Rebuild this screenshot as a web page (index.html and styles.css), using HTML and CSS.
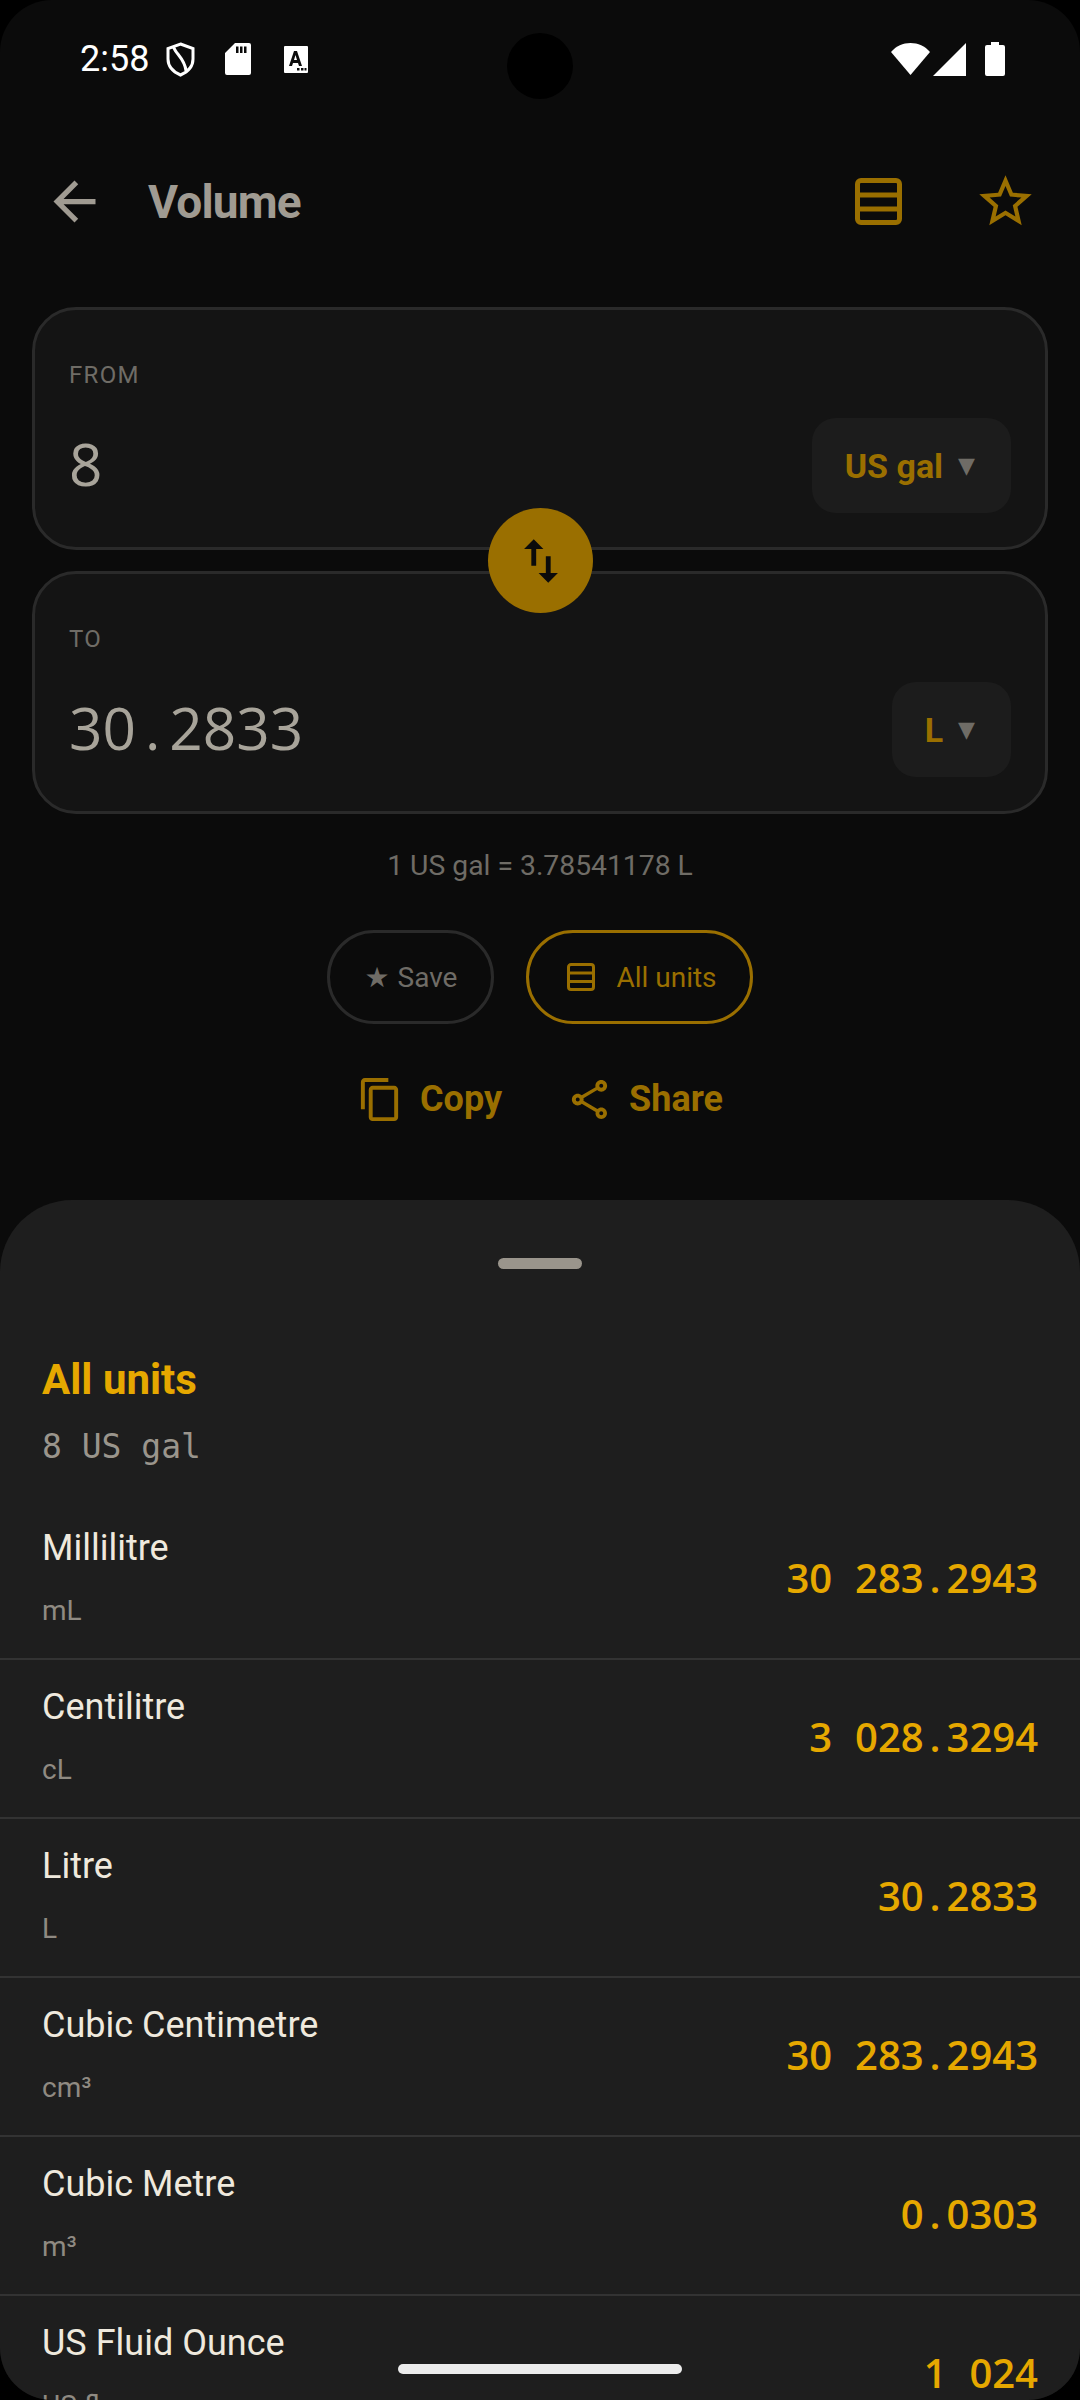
FILE: index.html
```html
<!DOCTYPE html>
<html lang="en">
<head>
    <meta charset="UTF-8">
    <meta name="viewport" content="width=device-width, initial-scale=1.0">
    <link rel="stylesheet" href="styles.css">
    <title>Volume</title>
</head>
<body>
    <div class="screen">
        <!-- Status bar -->
        <div class="status-bar">
            <span class="status-time">2:58</span>
            <svg class="icon-shield" viewBox="0 0 29 35"><path d="M14.500 2 L27 6.500 V17 C27 25 21.500 30 14.500 33 C7.500 30 2 25 2 17 V6.500 Z M8 6 C10 12 19 17 20 29" fill="none" stroke="#fff" stroke-width="3"/></svg>
            <svg class="icon-sd" viewBox="0 0 26 32"><path fill="#fff" fill-rule="evenodd" d="M10 0 H24 a2 2 0 0 1 2 2 V30 a2 2 0 0 1 -2 2 H2 a2 2 0 0 1 -2 -2 V10 Z M11 3.500 v6.500 h2.500 v-6.500 Z M15 3.500 v6.500 h2.500 v-6.500 Z M19 3.500 v6.500 h2.500 v-6.500 Z"/></svg>
            <svg class="icon-note" viewBox="0 0 24 27"><path fill="#fff" fill-rule="evenodd" d="M1 0 H23 a1 1 0 0 1 1 1 V26 a1 1 0 0 1 -1 1 H1 a1 1 0 0 1 -1 -1 V1 a1 1 0 0 1 1 -1 Z M10 5 L5 20 H8 L9 17 H14 L15 20 H18 L13 5 Z M10 14 L11.500 9 L13 14 Z M13 22 v2.500 h2.500 v-2.500 Z M17 22 v2.500 h2.500 v-2.500 Z M20.500 22 v2.500 h2 v-2.500 Z"/></svg>
            <div class="status-right">
                <svg class="icon-wifi" viewBox="0 0 39 32"><path fill="#fff" d="M19.500 32 L0 9 C5 3 12 0 19.500 0 C27 0 34 3 39 9 Z"/></svg>
                <svg class="icon-signal" viewBox="0 0 33 33"><path fill="#fff" d="M33 0 V33 H0 Z"/></svg>
                <svg class="icon-battery" viewBox="0 0 20 34"><path fill="#fff" d="M6 0 H14 V3 H18 a2 2 0 0 1 2 2 V32 a2 2 0 0 1 -2 2 H2 a2 2 0 0 1 -2 -2 V5 a2 2 0 0 1 2 -2 H6 Z"/></svg>
            </div>
        </div>

        <!-- Top bar -->
        <div class="app-bar">
            <svg class="back" viewBox="0 0 24 24"><path d="M20 11H7.830l5.590-5.590L12 4l-8 8 8 8 1.410-1.410L7.830 13H20v-2z"/></svg>
            <h1 class="app-title">Volume</h1>
            <svg class="bar-table" viewBox="0 0 47 47"><path d="M2.500 6 a3.500 3.500 0 0 1 3.500 -3.500 H41 a3.500 3.500 0 0 1 3.500 3.500 V41 a3.500 3.500 0 0 1 -3.500 3.500 H6 a3.500 3.500 0 0 1 -3.500 -3.500 Z M2.500 17 H44.500 M2.500 31 H44.500" fill="none" stroke-width="5"/></svg>
            <svg class="bar-star" viewBox="0 0 24 24"><path d="M22 9.240l-7.190-.620L12 2 9.190 8.630 2 9.240l5.460 4.730L5.820 21 12 17.270 18.180 21l-1.630-7.030L22 9.240zM12 15.400l-3.760 2.270 1-4.280-3.320-2.880 4.380-.380L12 6.100l1.710 4.040 4.380.380-3.320 2.880 1 4.280L12 15.400z"/></svg>
        </div>

        <!-- Converter -->
        <div class="converter">
            <div class="card">
                <div class="card-label">FROM</div>
                <div class="card-row">
                    <span class="card-value">8</span>
                    <div class="unit-select"><span class="unit-name">US gal</span><span class="caret">▼</span></div>
                </div>
            </div>
            <div class="card">
                <div class="card-label">TO</div>
                <div class="card-row">
                    <span class="card-value">30<span class="cell">.</span>2833</span>
                    <div class="unit-select"><span class="unit-name">L</span><span class="caret">▼</span></div>
                </div>
            </div>
            <div class="swap">
                <svg viewBox="0 0 24 24"><path d="M16 17.010V10h-2v7.010h-3L15 21l4-3.990h-3zM9 3L5 6.990h3V14h2V6.990h3L9 3z"/></svg>
            </div>
        </div>

        <p class="rate">1 US gal = 3.78541178 L</p>

        <div class="chips">
            <div class="chip"><span class="chip-star">★</span> Save</div>
            <div class="chip chip-active">
                <svg viewBox="0 0 28 28"><path d="M1.500 4 a2.500 2.500 0 0 1 2.500 -2.500 H24 a2.500 2.500 0 0 1 2.500 2.500 V24 a2.500 2.500 0 0 1 -2.500 2.500 H4 a2.500 2.500 0 0 1 -2.500 -2.500 Z M1.500 10 H26.500 M1.500 18.500 H26.500" fill="none" stroke-width="3"/></svg>
                All units
            </div>
        </div>

        <div class="actions">
            <div class="action">
                <svg viewBox="0 0 24 24"><path d="M16 1H4c-1.100 0-2 .9-2 2v14h2V3h12V1zm3 4H8c-1.100 0-2 .9-2 2v14c0 1.100.9 2 2 2h11c1.100 0 2-.9 2-2V7c0-1.100-.9-2-2-2zm0 16H8V7h11v14z"/></svg>
                Copy
            </div>
            <div class="action">
                <svg viewBox="0 0 24 24"><path d="M18 16.080c-.76 0-1.440.3-1.960.77L8.910 12.700c.05-.23.09-.46.09-.7s-.04-.47-.09-.7l7.050-4.110c.54.5 1.250.81 2.040.81 1.660 0 3-1.340 3-3s-1.340-3-3-3-3 1.340-3 3c0 .24.04.47.09.7L8.040 9.810C7.500 9.310 6.790 9 6 9c-1.660 0-3 1.340-3 3s1.340 3 3 3c.79 0 1.500-.31 2.040-.81l7.120 4.160c-.05.21-.08.43-.08.65 0 1.610 1.310 2.920 2.920 2.920 1.610 0 2.920-1.310 2.920-2.920s-1.310-2.920-2.920-2.920zM18 4c.55 0 1 .45 1 1s-.45 1-1 1-1-.45-1-1 .45-1 1-1zM6 13c-.55 0-1-.45-1-1s.45-1 1-1 1 .45 1 1-.45 1-1 1zm12 7.020c-.55 0-1-.45-1-1s.45-1 1-1 1 .45 1 1-.45 1-1 1z"/></svg>
                Share
            </div>
        </div>

        <!-- Bottom sheet -->
        <div class="sheet">
            <div class="handle"></div>
            <h2 class="sheet-title">All units</h2>
            <div class="sheet-sub">8 US gal</div>
            <div class="unit-row">
                <div class="row-text"><div class="row-name">Millilitre</div><div class="row-unit">mL</div></div>
                <div class="row-value">30<span class="cell"> </span>283<span class="cell">.</span>2943</div>
            </div>
            <div class="unit-row">
                <div class="row-text"><div class="row-name">Centilitre</div><div class="row-unit">cL</div></div>
                <div class="row-value">3<span class="cell"> </span>028<span class="cell">.</span>3294</div>
            </div>
            <div class="unit-row">
                <div class="row-text"><div class="row-name">Litre</div><div class="row-unit">L</div></div>
                <div class="row-value">30<span class="cell">.</span>2833</div>
            </div>
            <div class="unit-row">
                <div class="row-text"><div class="row-name">Cubic Centimetre</div><div class="row-unit">cm³</div></div>
                <div class="row-value">30<span class="cell"> </span>283<span class="cell">.</span>2943</div>
            </div>
            <div class="unit-row">
                <div class="row-text"><div class="row-name">Cubic Metre</div><div class="row-unit">m³</div></div>
                <div class="row-value">0<span class="cell">.</span>0303</div>
            </div>
            <div class="unit-row">
                <div class="row-text"><div class="row-name">US Fluid Ounce</div><div class="row-unit">US fl oz</div></div>
                <div class="row-value">1<span class="cell"> </span>024</div>
            </div>
        </div>

        <div class="camera"></div>
        <div class="home-bar"></div>
    </div>
</body>
</html>
```

FILE: styles.css
```css
html, body {
    margin: 0;
    padding: 0;
    background: #000;
}

body {
    font-family: Roboto, sans-serif;
}

.screen {
    position: relative;
    width: 1080px;
    height: 2400px;
    overflow: hidden;
    background: #0b0b0b;
    border-radius: 52px;
    display: flex;
    flex-direction: column;
}

/* Status bar */
.status-bar {
    display: flex;
    align-items: center;
    height: 44px;
    padding: 37px 75px 0 80px;
    color: #fff;
    flex-shrink: 0;
}

.status-time {
    font-size: 36px;
    line-height: 44px;
    width: 86px;
}

.icon-shield { width: 29px; height: 35px; margin-right: 30px; }
.icon-sd { width: 26px; height: 32px; margin-right: 33px; }
.icon-note { width: 24px; height: 27px; }

.status-right {
    margin-left: auto;
    display: flex;
    align-items: center;
}

.icon-wifi { width: 39px; height: 32px; margin-right: 3px; }
.icon-signal { width: 33px; height: 33px; margin-right: 19px; }
.icon-battery { width: 20px; height: 34px; }

/* App bar */
.app-bar {
    display: flex;
    align-items: center;
    height: 64px;
    margin-top: 89px;
    padding: 0 36px 0 43px;
}

.back {
    width: 63px;
    height: 63px;
    fill: #a09b92;
}

.app-title {
    margin: 0 0 0 42px;
    font-size: 46px;
    font-weight: 700;
    letter-spacing: -0.8px;
    color: #a09b92;
    flex: 1;
}

.bar-table {
    width: 47px;
    height: 47px;
    stroke: #9a6f00;
    margin-right: 72px;
}

.bar-star {
    width: 63px;
    height: 63px;
    fill: #9a6f00;
    margin-right: 7px;
}

/* Converter cards */
.converter {
    position: relative;
    margin-top: 74px;
    padding: 0 32px;
    display: flex;
    flex-direction: column;
    gap: 21px;
}

.card {
    height: 243px;
    box-sizing: border-box;
    background: #141414;
    border: 3px solid #2a2a2a;
    border-radius: 44px;
    padding: 50px 34px 0 34px;
}

.card-label {
    font-size: 24px;
    line-height: 30px;
    letter-spacing: 1.300px;
    color: #6f6c66;
}

.card-row {
    display: flex;
    align-items: center;
    justify-content: space-between;
    margin-top: 28px;
}

/* digits from a proportional face, dot and space get a digit-wide cell */
.card-value {
    font-family: "Open Sans", sans-serif;
    font-size: 58.500px;
    margin-bottom: 6px;
    color: #a8a49a;
}

.cell {
    display: inline-block;
    width: 0.572em;
    text-align: center;
    white-space: pre;
}

.unit-select {
    display: flex;
    align-items: center;
    height: 95px;
    padding: 0 36px 0 33px;
    gap: 15px;
    background: #1c1c1c;
    border-radius: 24px;
}

.unit-name {
    font-size: 34px;
    font-weight: 700;
    color: #9a6f00;
}

.caret {
    font-family: "DejaVu Sans", sans-serif;
    font-size: 22px;
    color: #6f6c66;
}

.swap {
    position: absolute;
    left: 488px;
    top: 201px;
    width: 105px;
    height: 105px;
    border-radius: 50%;
    background: #9a6f00;
    display: flex;
    align-items: center;
    justify-content: center;
}

.swap svg {
    width: 58px;
    height: 58px;
    fill: #0b0b0b;
}

/* Rate, chips and actions */
.rate {
    margin: 35px 0 0;
    text-align: center;
    font-size: 28.300px;
    line-height: 34px;
    color: #6f6c66;
}

.chips {
    display: flex;
    justify-content: center;
    gap: 32px;
    margin-top: 47px;
}

.chip {
    display: flex;
    align-items: center;
    gap: 8px;
    height: 94px;
    box-sizing: border-box;
    padding: 0 34px;
    border: 3px solid #2a2a2a;
    border-radius: 47px;
    font-size: 28px;
    color: #6f6c66;
}

.chip-star {
    font-family: "DejaVu Sans", sans-serif;
}

.chip-active {
    gap: 21px;
    padding-left: 38px;
    padding-right: 33px;
    border-color: #9a6f00;
    color: #9a6f00;
}

.chip-active svg {
    width: 28px;
    height: 28px;
    stroke: #9a6f00;
}

.actions {
    display: flex;
    justify-content: center;
    gap: 64px;
    margin-top: 50px;
}

.action {
    display: flex;
    align-items: center;
    gap: 16px;
    height: 50px;
    font-size: 36px;
    font-weight: 700;
    color: #9a6f00;
}

.action svg {
    width: 47px;
    height: 47px;
    fill: #9a6f00;
}

/* Sheet */
.sheet {
    margin-top: 76px;
    flex: 1;
    background: #1e1e1e;
    border-radius: 72px 72px 0 0;
    padding-top: 58px;
}

.handle {
    width: 84px;
    height: 11px;
    margin: 0 auto;
    background: #9a958c;
    border-radius: 6px;
}

.sheet-title {
    margin: 87px 0 0 42px;
    font-size: 42px;
    line-height: 48px;
    font-weight: 700;
    color: #e6a800;
}

.sheet-sub {
    margin: 23px 0 34px 42px;
    font-family: "DejaVu Sans Mono", monospace;
    font-size: 33px;
    line-height: 40px;
    color: #9a958c;
}

.unit-row {
    display: flex;
    align-items: center;
    justify-content: space-between;
    height: 159px;
    box-sizing: border-box;
    padding: 0 42px;
    border-bottom: 2px solid #333;
}

.row-text {
    margin-bottom: 6px;
}

.row-name {
    font-size: 36px;
    line-height: 44px;
    color: #efe9dd;
}

.row-unit {
    margin-top: 24px;
    font-size: 28px;
    line-height: 34px;
    color: #8f8a82;
}

.row-value {
    font-family: "Open Sans", sans-serif;
    font-size: 40px;
    line-height: 44px;
    margin-bottom: 4px;
    font-weight: 600;
    color: #e6a800;
}

/* Over everything */
.camera {
    position: absolute;
    left: 507px;
    top: 33px;
    width: 66px;
    height: 66px;
    border-radius: 50%;
    background: #000;
}

.home-bar {
    position: absolute;
    left: 398px;
    top: 2364px;
    width: 284px;
    height: 10px;
    border-radius: 5px;
    background: #ececec;
}
```
